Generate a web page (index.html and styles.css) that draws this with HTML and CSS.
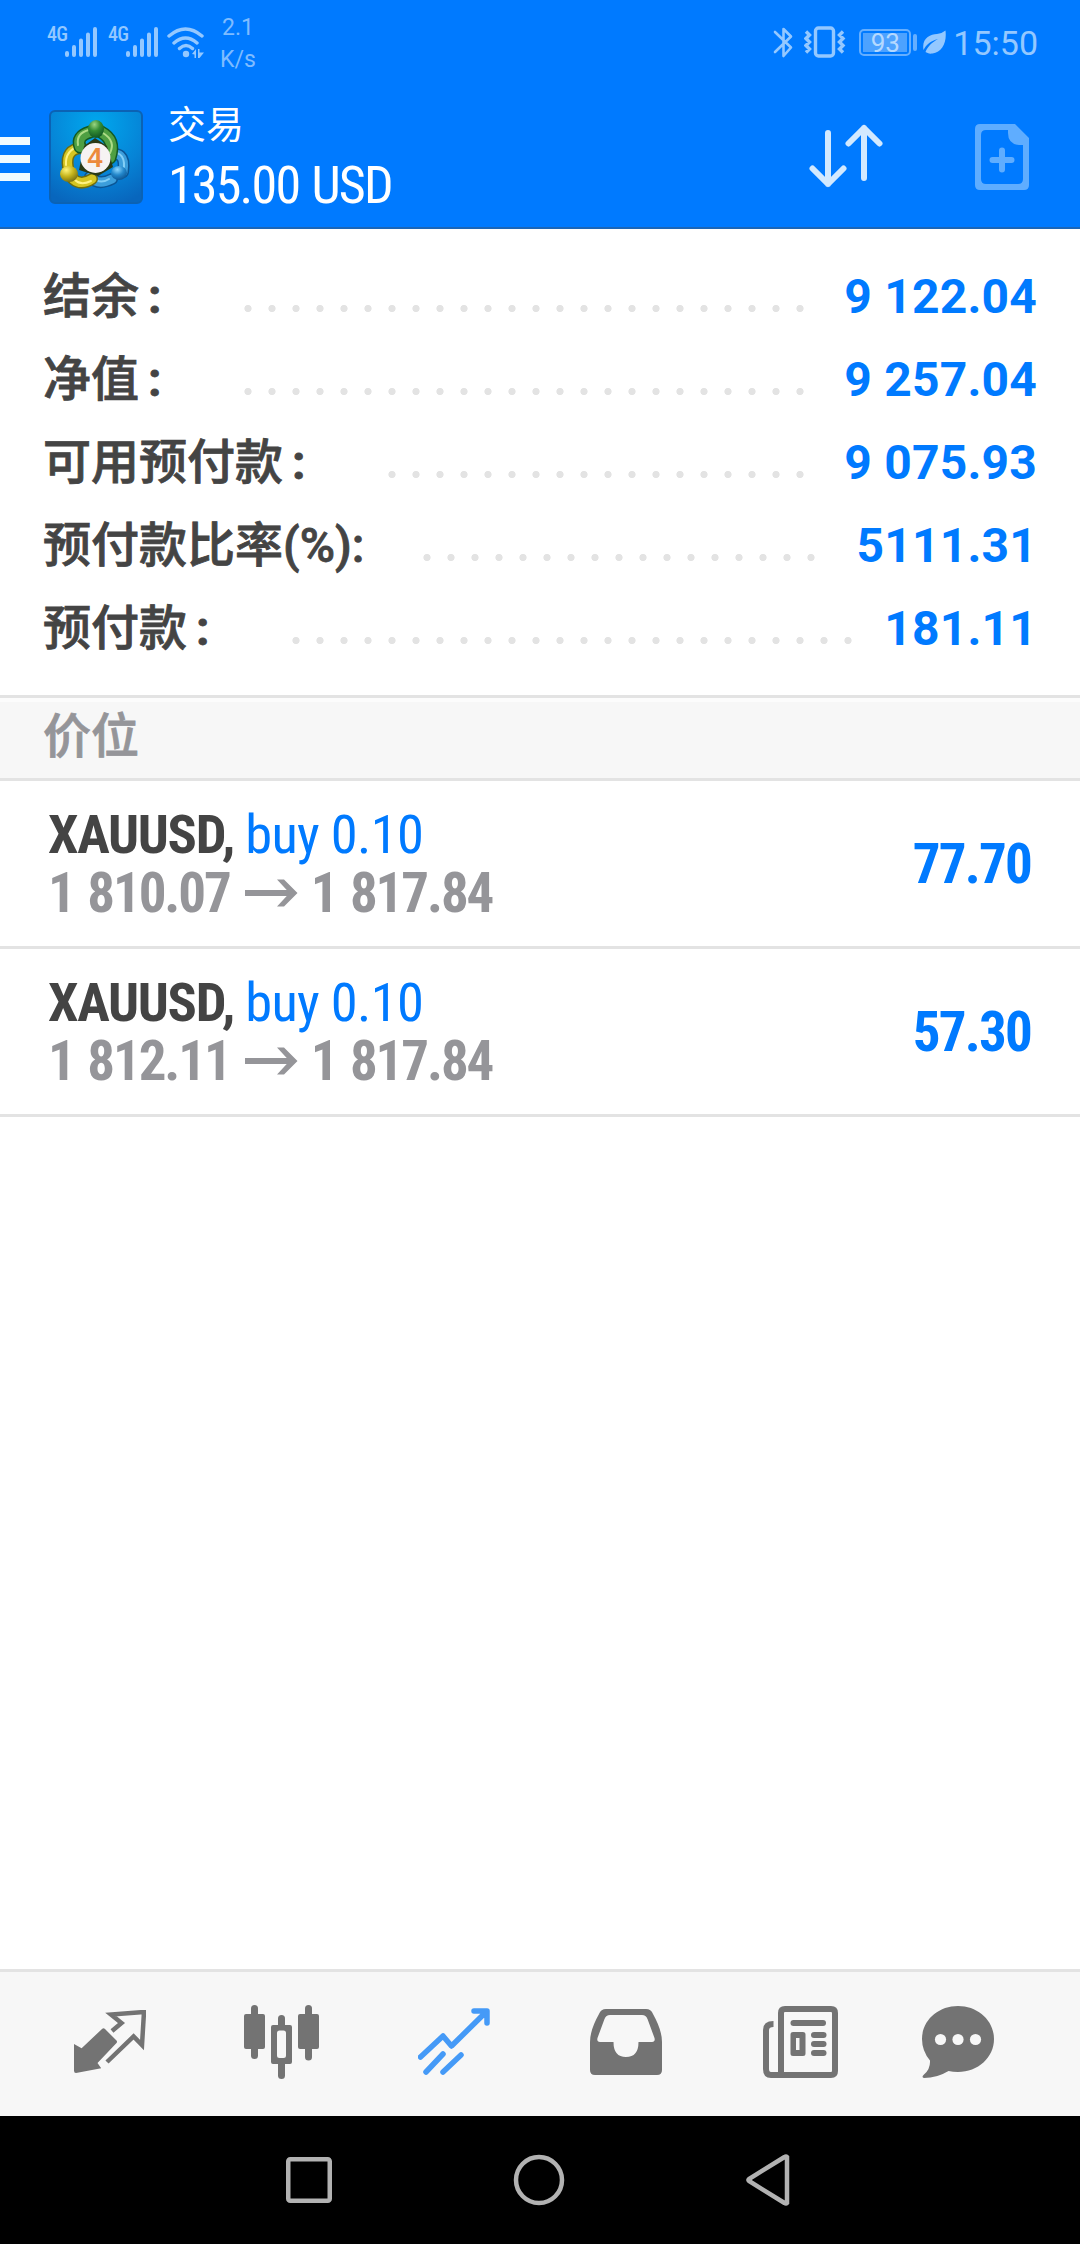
FILE: index.html
```html
<!DOCTYPE html>
<html lang="zh-CN">
<head>
<meta charset="utf-8">
<title>交易</title>
<link rel="stylesheet" href="styles.css">
</head>
<body>
<header class="header">
  <div class="status">
    <div class="status-left">
      <span class="net">4G</span>
      <svg class="signal" width="32" height="30" viewBox="0 0 32 30"><path d="M2 26v2M9 20v8M16 13.500v14.500M23 7.500v20.500M30 2v26"/></svg>
      <span class="net net-second">4G</span>
      <svg class="signal" width="32" height="30" viewBox="0 0 32 30"><path d="M2 26v2M9 20v8M16 13.500v14.500M23 7.500v20.500M30 2v26"/></svg>
      <svg class="wifi" width="38" height="31" viewBox="0 0 38 31">
        <path class="wave" d="M2 9Q18.500-5 35 9M7 16Q18.500 6 30 16M12.500 21.500Q19 15.500 25.500 21.500"/>
        <circle cx="19" cy="27" r="3.200"/><path d="M25 27l4-5v9h-1.500v-3.500zM31 22h1.500v3.500H37L32.500 31H31z"/>
      </svg>
      <div class="speed"><span>2.1</span><span>K/s</span></div>
    </div>
    <div class="status-right">
      <svg class="bt" width="21" height="33" viewBox="0 0 21 33"><path d="M2 6l16 15.500-7.500 8.500V3L18 10.500 2 26"/></svg>
      <svg class="vibrate" width="42" height="32" viewBox="0 0 42 32"><rect x="11.500" y="2" width="18" height="28" rx="3"/><path d="M2 5.500l3.500 3.500-3.500 3.500 3.500 3.500L2 19.500 5.500 23 2 26.500M39 5.500L35.500 9l3.500 3.500-3.500 3.500 3.500 3.500-3.500 3.500 3.500 3.500"/></svg>
      <div class="battery"><span>93</span></div><i class="battery-tip"></i>
      <svg class="leaf" width="23" height="24" viewBox="0 0 23 24"><path d="M22.500 0.500C24 13 19 22 9.500 23.500 6 24 4 23 2.500 22 5 16 9 12.500 15 9 8 11 3.500 14 0.500 20-1.500 8 7 4.500 14 4Q19 3.500 22.500 0.500z"/></svg>
      <span class="clock">15:50</span>
    </div>
  </div>
  <div class="toolbar">
    <div class="menu"><i></i><i></i><i></i></div>
    <svg class="logo" width="94" height="94" viewBox="0 0 94 94">
      <defs>
        <radialGradient id="bg" cx=".5" cy=".15" r=".9"><stop offset="0" stop-color="#00a8ee"/><stop offset=".6" stop-color="#0683d6"/><stop offset="1" stop-color="#0866bd"/></radialGradient>
        <radialGradient id="gr" cx=".4" cy=".25" r=".8"><stop offset="0" stop-color="#9ad582"/><stop offset=".45" stop-color="#348d35"/><stop offset="1" stop-color="#0c5220"/></radialGradient>
        <radialGradient id="ye" cx=".35" cy=".25" r=".8"><stop offset="0" stop-color="#fff57c"/><stop offset=".5" stop-color="#c6b51d"/><stop offset="1" stop-color="#746d12"/></radialGradient>
        <radialGradient id="bl" cx=".4" cy=".25" r=".8"><stop offset="0" stop-color="#8ed8ff"/><stop offset=".5" stop-color="#2387cb"/><stop offset="1" stop-color="#0b508e"/></radialGradient>
      </defs>
      <rect x="1" y="1" width="92" height="92" rx="5" fill="url(#bg)" stroke="#0b62b4" stroke-width="2"/>
      <g fill="none" stroke-linecap="round">
        <path d="M56 46Q78 38 74 62M41 67Q49 76 63 69" stroke="#0b5594" stroke-width="12"/>
        <path d="M56 46Q78 38 74 62M41 67Q49 76 63 69" stroke="#3c9edb" stroke-width="9"/>
        <path d="M57 43Q76 39 75 57M43 67Q51 75 60 69" stroke="#83cff6" stroke-width="2"/>
        <path d="M19 57Q16 39 33 38M43 69Q32 76 24 69" stroke="#706d0d" stroke-width="12"/>
        <path d="M19 57Q16 39 33 38M43 69Q32 76 24 69" stroke="#d5c522" stroke-width="9"/>
        <path d="M17 55Q16 40 31 36M42 71Q32 76 26 70" stroke="#fff281" stroke-width="2"/>
        <path d="M31 37Q27 26 41 22M52 22Q67 30 61 48" stroke="#125a23" stroke-width="13"/>
        <path d="M31 37Q27 26 41 22M52 22Q67 30 61 48" stroke="#4f9f42" stroke-width="10"/>
        <path d="M29 35Q27 23 40 20M54 23Q67 31 61 43" stroke="#addb86" stroke-width="2"/>
      </g>
      <path d="M35 36L46 28 58 36 64 57 49 66 30 60z" fill="#293a16"/>
      <ellipse cx="47" cy="19" rx="8" ry="9" fill="url(#gr)"/>
      <ellipse cx="20" cy="64" rx="9" ry="8" fill="url(#ye)"/>
      <ellipse cx="70" cy="63" rx="8" ry="7" fill="url(#bl)"/>
      <circle cx="46.500" cy="48" r="15" fill="#f6f3f3"/>
      <text x="46" y="57" class="logo-digit">4</text>
    </svg>
    <div class="heading"><span class="title">交易</span><span class="profit cond">135.00 USD</span></div>
    <svg class="sort" width="74" height="64" viewBox="0 0 74 64"><path d="M19 9v51M3.500 44.500L19 60l15.500-15.500M55 54V4M39.500 19.500L55 4l15.500 15.500"/></svg>
    <svg class="neworder" width="54" height="66" viewBox="0 0 54 66"><path fill-rule="evenodd" d="M5 0H40L54 14V61Q54 66 49 66H5Q0 66 0 61V5Q0 0 5 0zM11 6Q6 6 6 11V55Q6 60 11 60H43Q48 60 48 55V21H44Q33 20 33 9V6z"/><path class="plus" d="M17.500 36h19M27 26.500v19"/></svg>
  </div>
</header>

<section class="summary">
  <div class="line"><span class="label">结余<span class="colon">:</span></span><i class="leader" style="width:576px"></i><b class="value">9 122.04</b></div>
  <div class="line"><span class="label">净值<span class="colon">:</span></span><i class="leader" style="width:576px"></i><b class="value">9 257.04</b></div>
  <div class="line"><span class="label">可用预付款<span class="colon">:</span></span><i class="leader" style="width:432px"></i><b class="value">9 075.93</b></div>
  <div class="line"><span class="label">预付款比率<span class="pct">(%):</span></span><i class="leader" style="width:408px"></i><b class="value">5111.31</b></div>
  <div class="line"><span class="label">预付款<span class="colon">:</span></span><i class="leader" style="width:576px"></i><b class="value">181.11</b></div>
</section>
<h2 class="section">价位</h2>
<main class="positions">
  <div class="position">
    <div class="deal cond">
      <div><b class="symbol">XAUUSD,</b> <span class="side">buy 0.10</span></div>
      <div class="prices"><b>1 810.07</b><svg width="53" height="30" viewBox="0 0 53 30"><path d="M0 15H49"/><path class="head" d="M32 1.500H39L52.500 15 39 28.500H32L44.500 15z"/></svg><b>1 817.84</b></div>
    </div>
    <b class="result cond">77.70</b>
  </div>
  <div class="position">
    <div class="deal cond">
      <div><b class="symbol">XAUUSD,</b> <span class="side">buy 0.10</span></div>
      <div class="prices"><b>1 812.11</b><svg width="53" height="30" viewBox="0 0 53 30"><path d="M0 15H49"/><path class="head" d="M32 1.500H39L52.500 15 39 28.500H32L44.500 15z"/></svg><b>1 817.84</b></div>
    </div>
    <b class="result cond">57.30</b>
  </div>
</main>

<nav class="tabs">
  <svg class="quotes" width="72" height="63" viewBox="0 0 72 63"><path d="M0 34L7.600 38.300 28 19Q29.500 17.500 31 19L42.500 30.500Q43.500 31.700 42.500 33L23.500 53 27.200 58.300 2 63Q0 63 0 60.700z"/><path class="outline" d="M38 21L47.500 13 37 4.500 70 2 68 35 59.600 26.500 33 52"/></svg>
  <svg class="charts" width="75" height="74" viewBox="0 0 75 74"><rect y="9" width="21" height="35" rx="2"/><rect x="7" width="7" height="54" rx="3.500"/><rect x="54" y="9" width="21" height="35" rx="2"/><rect x="61" width="7" height="55.500" rx="3.500"/><rect x="34" y="10" width="7" height="14" rx="3.500"/><rect x="34" y="54" width="7" height="20" rx="3.500"/><path fill-rule="evenodd" d="M29 20H46Q48 20 48 22V57Q48 59 46 59H29Q27 59 27 57V22Q27 20 29 20zM35.500 25.500Q33 25.500 33 28V50.500Q33 53 35.500 53H39.500Q42 53 42 50.500V28Q42 25.500 39.500 25.500z"/></svg>
  <svg class="trade" width="72" height="67" viewBox="0 0 72 67"><path d="M2.500 49L25 28 33.500 38 68 4M56 3H69V15M8 64L25 46M25 64L43 47"/></svg>
  <svg class="mail" width="72" height="66" viewBox="0 0 72 66"><path fill-rule="evenodd" d="M0 33Q0 21 9 5 11 0 16 0H56Q61 0 63 5 72 21 72 33V61Q72 66 67 66H5Q0 66 0 61zM23.500 33H10Q6.500 33 7.500 29L14.500 10Q16 6 20 6H52Q56 6 57.500 10L64.500 29Q65.500 33 62 33H48.500Q48.500 48 36 48 23.500 48 23.500 33z"/></svg>
  <svg class="news" width="75" height="72" viewBox="0 0 75 72"><path class="frame" d="M10.500 18Q3 18 3 24V63Q3 69 8 69H18M22 3H68Q72 3 72 7V65Q72 69 68 69H18V7Q18 3 22 3z"/><rect x="27.500" y="14" width="35.500" height="6" rx="3"/><path fill-rule="evenodd" d="M30 26H40Q42.500 26 42.500 28.500V47.500Q42.500 50 40 50H30Q27.500 50 27.500 47.500V28.500Q27.500 26 30 26zM33 32V44H36.500V32z"/><rect x="48" y="26" width="15.500" height="6" rx="3"/><rect x="48" y="35" width="15.500" height="6" rx="3"/><rect x="48" y="44" width="15.500" height="6" rx="3"/></svg>
  <svg class="chat" width="72" height="72" viewBox="0 0 72 72"><path fill-rule="evenodd" d="M36 0C56 0 72 14.500 72 33S56 66 36 66Q31 66 26.500 65 15 72 2 72-1 71 2 68.500 8.500 63 8 54.500 0 45 0 33C0 14.500 16 0 36 0z"/><g fill="#f7f7f7"><circle cx="18.500" cy="33.500" r="5.600"/><circle cx="36" cy="33.500" r="5.600"/><circle cx="53.500" cy="33.500" r="5.600"/></g></svg>
</nav>
<footer class="sysnav">
  <svg width="46" height="46" viewBox="0 0 46 46"><rect x="2.250" y="2.250" width="41.500" height="41.500" rx="2"/></svg>
  <svg width="52" height="52" viewBox="0 0 52 52"><circle cx="26" cy="26" r="23"/></svg>
  <svg width="44" height="52" viewBox="0 0 44 52"><path d="M41 3V49Q40 50 38.500 49L3 27Q2 26 3 25L38.500 3Q40 2 41 3z"/></svg>
</footer>
</body>
</html>
```
FILE: styles.css
```css
* { box-sizing: border-box; }
body {
  margin: 0;
  width: 1080px;
  height: 2244px;
  display: flex;
  flex-direction: column;
  background: #fff;
  font-family: Roboto, "Noto Sans CJK SC", sans-serif;
}
svg { display: block; flex: none; }
i { display: block; }
.cond { font-family: "Roboto Condensed", Roboto, sans-serif; font-stretch: 75%; }

.header { height: 229px; background: #007aff; border-bottom: 2px solid #1b66b8; color: #fff; }
.status { display: flex; justify-content: space-between; height: 84px; color: #94c8ff; fill: #94c8ff; }
.status-left, .status-right { display: flex; align-items: flex-start; }
.status-left { padding-left: 47px; }
.net { width: 18px; margin-top: 23px; font: 500 20px/22px "Roboto Condensed", Roboto, sans-serif; font-stretch: 75%; letter-spacing: -0.8px; white-space: nowrap; }
.net-second { margin-left: 11px; }
.signal { margin-top: 27px; fill: none; stroke: #94c8ff; stroke-width: 4; stroke-linecap: round; }
.wifi { margin: 27px 0 0 9px; }
.wave { fill: none; stroke: #94c8ff; stroke-width: 3.4; stroke-linecap: round; }
.speed { width: 40px; margin: 12px 0 0 13px; display: flex; flex-direction: column; align-items: center; font-size: 23px; line-height: 32px; color: #7fbcff; }
.status-right { padding-right: 42px; }
.bt { margin-top: 26px; fill: none; stroke: #94c8ff; stroke-width: 2.6; stroke-linejoin: round; stroke-linecap: round; }
.vibrate { margin: 26px 0 0 10px; fill: none; stroke: #94c8ff; stroke-width: 3.4; }
.battery { width: 52px; height: 27px; margin: 29px 0 0 13px; padding: 2px; border: 2px solid #66afff; border-radius: 5px; text-align: center; font-size: 26px; line-height: 21px; color: #b5d9ff; }
.battery span { display: block; height: 19px; background: #4da2ff; line-height: 20px; }
.battery-tip { width: 4px; height: 17px; margin: 34px 0 0 2px; border-radius: 2px; background: #66afff; }
.leaf { margin: 30px 0 0 6px; }
.clock { margin: 23px 0 0 7px; font-size: 34px; line-height: 40px; }

.toolbar { display: flex; align-items: flex-start; height: 143px; }
.menu { width: 30px; padding-top: 53px; display: grid; gap: 10px; }
.menu i { height: 8px; background: #f0fbff; }
.logo { margin: 26px 0 0 19px; }
.logo-digit { font: bold 27px "Liberation Sans", sans-serif; fill: #ec8a3c; text-anchor: middle; }
.heading { display: flex; flex-direction: column; width: 300px; margin: 12px 0 0 25px; }
.title { font: 38px/52px "Noto Sans CJK SC", sans-serif; }
.profit { margin-top: 8px; font-size: 52px; line-height: 60px; letter-spacing: -1.8px; word-spacing: 2px; white-space: nowrap; }
.sort { margin: 40px 0 0 341px; fill: none; stroke: #d2e9ff; stroke-width: 6; stroke-linecap: round; stroke-linejoin: round; }
.neworder { margin: 40px 0 0 92px; fill: #5fadff; }
.plus { stroke: #5fadff; stroke-width: 6; stroke-linecap: round; }

.summary { height: 466px; padding: 26px 43px 0; }
.line { display: flex; height: 83px; align-items: center; color: #444; }
.label { margin-top: -5px; font: 500 48px/78px "Noto Sans CJK SC", sans-serif; white-space: nowrap; -webkit-text-stroke: 0.8px; }
.colon { display: inline-block; width: 48px; padding-left: 9px; font-family: Roboto, sans-serif; font-weight: 700; }
.pct { padding-right: 2px; font-family: Roboto, sans-serif; }
.leader { height: 7px; margin: 23px 0 0 49px; background: radial-gradient(circle, #e3e3e3 3.2px, transparent 4px) 0 0 / 24px 7px repeat-x; }
.value { margin-left: auto; font-size: 48px; letter-spacing: 0.2px; color: #007aff; white-space: nowrap; }

.section { height: 86px; margin: 0; padding: 0 43px; border: solid #e3e3e3; border-width: 3px 0; background: linear-gradient(#fcfcfc 4px, #f7f7f7 4px); font: 500 48px/68px "Noto Sans CJK SC", sans-serif; color: #959599; -webkit-text-stroke: 0.8px; }
.positions { flex: 1; }
.position { display: flex; justify-content: space-between; align-items: center; height: 168px; padding: 0 48px; border-bottom: 3px solid #e3e3e3; }
.deal { font-size: 54.5px; line-height: 59px; letter-spacing: -1.3px; white-space: nowrap; }
.symbol { color: #444; }
.side, .result { color: #007aff; }
.side { letter-spacing: -0.7px; }
.result { margin-right: 1px; font-size: 55px; letter-spacing: -1.8px; }
.prices { display: flex; align-items: center; font-size: 55px; letter-spacing: -2.1px; word-spacing: 3px; color: #959599; }
.prices svg { margin: 0 13px 0 15px; fill: none; stroke: #959599; stroke-width: 6; }
.prices .head { fill: #959599; stroke: none; }

.tabs { display: flex; align-items: center; gap: 99px; height: 147px; padding: 0 0 5px 74px; border-top: 3px solid #e3e3e3; background: #f7f7f7; fill: #737373; }
.outline { fill: none; stroke: #737373; stroke-width: 4.5; }
.charts { margin-left: -1px; }
.trade { fill: none; stroke: #459af7; stroke-width: 5.5; stroke-linecap: round; stroke-linejoin: round; }
.mail { margin-left: 1px; }
.frame { fill: none; stroke: #737373; stroke-width: 6; }
.news { margin-left: 2px; }
.chat { margin-left: -15px; }
.sysnav { display: flex; align-items: center; height: 128px; padding-left: 286px; background: #000; fill: none; stroke: #b2b2b2; stroke-width: 4.5; }
.sysnav svg { margin-right: 181px; }
```
